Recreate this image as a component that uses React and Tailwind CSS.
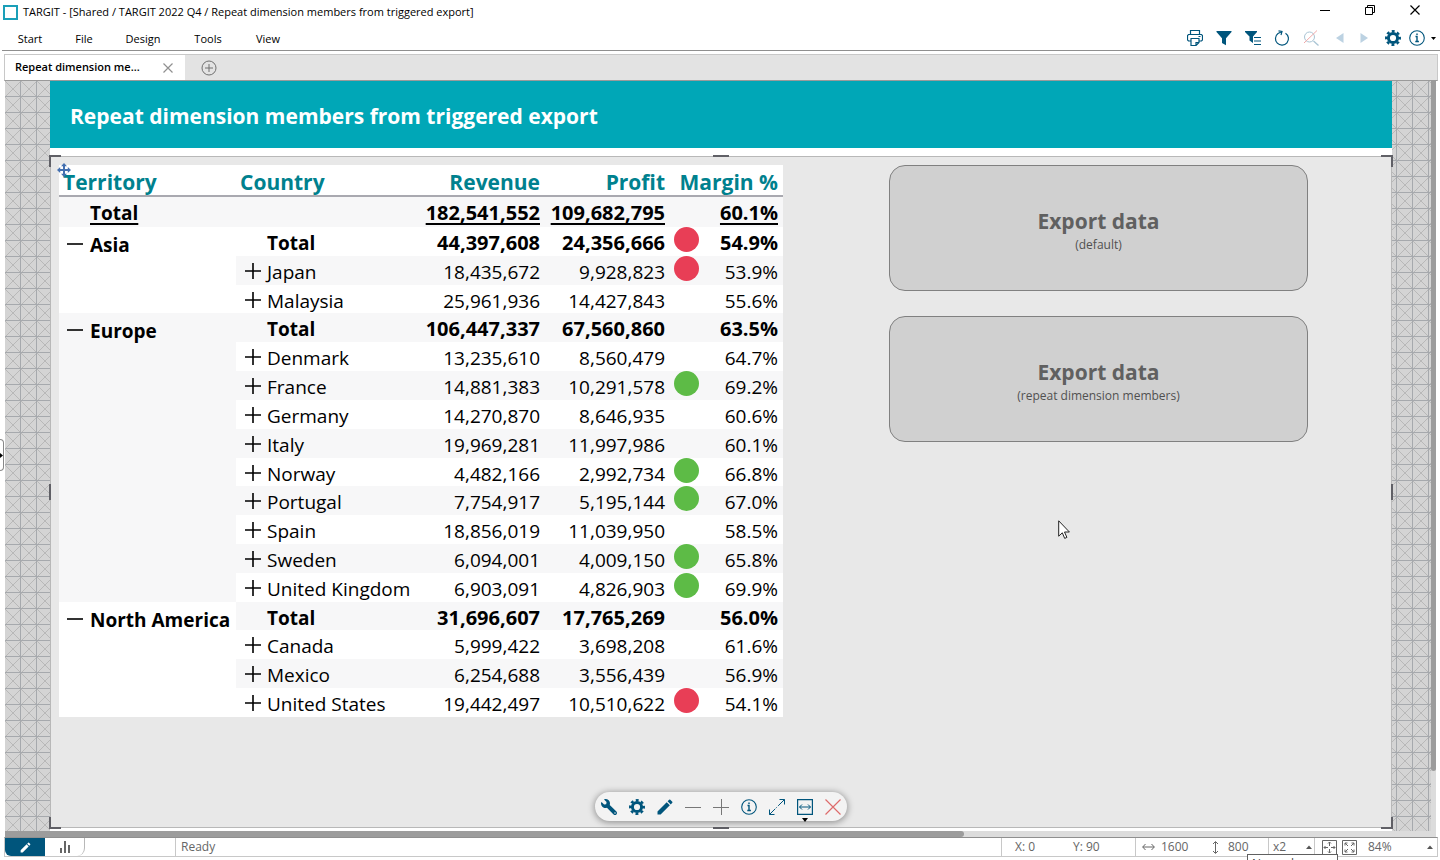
import React from 'react';
import { FaWrench } from 'react-icons/fa';
import { MdEdit } from 'react-icons/md';
import clsx from 'clsx';

const groups = [
  {
    name: 'Asia',
    rows: [
      { country: 'Total', revenue: '44,397,608', profit: '24,356,666', margin: '54.9%', dot: 'red' },
      { country: 'Japan', revenue: '18,435,672', profit: '9,928,823', margin: '53.9%', dot: 'red' },
      { country: 'Malaysia', revenue: '25,961,936', profit: '14,427,843', margin: '55.6%' },
    ],
  },
  {
    name: 'Europe',
    rows: [
      { country: 'Total', revenue: '106,447,337', profit: '67,560,860', margin: '63.5%' },
      { country: 'Denmark', revenue: '13,235,610', profit: '8,560,479', margin: '64.7%' },
      { country: 'France', revenue: '14,881,383', profit: '10,291,578', margin: '69.2%', dot: 'green' },
      { country: 'Germany', revenue: '14,270,870', profit: '8,646,935', margin: '60.6%' },
      { country: 'Italy', revenue: '19,969,281', profit: '11,997,986', margin: '60.1%' },
      { country: 'Norway', revenue: '4,482,166', profit: '2,992,734', margin: '66.8%', dot: 'green' },
      { country: 'Portugal', revenue: '7,754,917', profit: '5,195,144', margin: '67.0%', dot: 'green' },
      { country: 'Spain', revenue: '18,856,019', profit: '11,039,950', margin: '58.5%' },
      { country: 'Sweden', revenue: '6,094,001', profit: '4,009,150', margin: '65.8%', dot: 'green' },
      { country: 'United Kingdom', revenue: '6,903,091', profit: '4,826,903', margin: '69.9%', dot: 'green' },
    ],
  },
  {
    name: 'North America',
    rows: [
      { country: 'Total', revenue: '31,696,607', profit: '17,765,269', margin: '56.0%' },
      { country: 'Canada', revenue: '5,999,422', profit: '3,698,208', margin: '61.6%' },
      { country: 'Mexico', revenue: '6,254,688', profit: '3,556,439', margin: '56.9%' },
      { country: 'United States', revenue: '19,442,497', profit: '10,510,622', margin: '54.1%', dot: 'red' },
    ],
  },
];

const menus = [
  { label: 'Start', width: 'w-[60px]' },
  { label: 'File', width: 'w-12' },
  { label: 'Design', width: 'w-[70px]' },
  { label: 'Tools', width: 'w-[60px]' },
  { label: 'View', width: 'w-[60px]' },
];

const Svg = ({ size = 16, children, className }) => (
  <svg width={size} height={size} viewBox={`0 0 ${size} ${size}`} fill="none" stroke="currentColor" className={className} aria-hidden="true">
    {children}
  </svg>
);

const GearIcon = () => (
  <Svg>
    <circle cx="8" cy="8" r="4.6" strokeWidth="3" />
    <circle cx="8" cy="8" r="6.8" strokeWidth="2.4" strokeDasharray="2.9 2.44" strokeDashoffset="1.45" />
  </Svg>
);

const InfoIcon = () => (
  <Svg>
    <circle cx="8" cy="8" r="7.3" strokeWidth="1.1" />
    <path d="M6.5 6.5H8v5M6.3 11.5h3.6" strokeWidth="1.4" />
    <circle cx="8" cy="4.2" r="0.5" strokeWidth="1" />
  </Svg>
);

const PrintIcon = () => (
  <Svg>
    <path d="M3.5 4.5v-4h9v4M3.500 11h-2l-1-1v-4.500l1-1h13l1 1V10l-1 1h-2M11.500 6.500h2M3.500 8.500h9M4 8.500v7h5l3-3v-4M9 15.500v-3h3" strokeWidth="1.2" />
  </Svg>
);

const FilterIcon = () => (
  <Svg>
    <path d="M.5 1h15v1L10 8.200v7L6 13V8.200L.5 2z" fill="currentColor" stroke="none" />
  </Svg>
);

const FilterListIcon = () => (
  <Svg>
    <path d="M0 1h12v1L8 6.500V13L4.500 10.500V6.500L0 2z" fill="currentColor" stroke="none" />
    <path d="M9 7.500h7M9 11h7M9 14.500h7" strokeWidth="1.2" />
  </Svg>
);

const RefreshIcon = () => (
  <Svg>
    <path d="M11.500 3.200A6.500 6.500 0 1 1 4 3.500L8 1.500M4.500 .800L8 1.500L7 5" strokeWidth="1.2" />
  </Svg>
);

const NoSearchIcon = () => (
  <Svg>
    <circle cx="6.500" cy="7" r="5" stroke="#a9c4d4" />
    <path d="M10.500 11l5 4.500" stroke="#a9c4d4" strokeWidth="1.3" />
    <path d="M1 13L14 .500" stroke="#f0a9a9" />
  </Svg>
);

const PlusIcon = () => (
  <Svg>
    <path d="M0 8h16M8 0v16" strokeWidth="1.6" />
  </Svg>
);

const MinusIcon = () => (
  <Svg>
    <path d="M0 8h16" strokeWidth="1.6" />
  </Svg>
);

const CrossIcon = ({ size = 16 }) => (
  <Svg size={size}>
    <path d={`M.5 .5L${size - 0.5} ${size - 0.5}M${size - 0.5} .5L.5 ${size - 0.5}`} strokeWidth="1.2" />
  </Svg>
);

const ExpandIcon = () => (
  <Svg>
    <path d="M10.500 .500h5v5M5.500 15.500h-5v-5" />
    <path d="M15.500 .500L.500 15.500" strokeDasharray="9 1.500 1 1.500" />
  </Svg>
);

const FitWidthIcon = () => (
  <Svg>
    <path d="M.600.600h14.800v14.800H.600z" strokeWidth="1.2" />
    <path d="M2.500 8h11M5 5.500L2.500 8L5 10.500M11 5.500L13.500 8L11 10.500" strokeWidth="1" />
  </Svg>
);

const MoveIcon = () => (
  <svg width="14" height="14" viewBox="0 0 14 14" aria-hidden="true">
    <path d="M7 0l3 3.200H8v2.800h2.800V4L14 7l-3.200 3V8H8v2.800h2L7 14l-3-3.200h2V8H3.200v2L0 7l3.200-3v2H6V3.200H4z" fill="#4470b0" />
  </svg>
);

const Handle = ({ className }) => <span className={clsx('absolute border-[#606066]', className)} />;

const TableRow = ({ row, shaded, children }) => {
  const isTotal = row.country === 'Total';
  return (
    <tr className={clsx('align-top leading-6', shaded ? 'bg-[#f7f7f8]' : 'bg-white', isTotal ? 'text-[20px] font-bold' : 'text-[19px]')}>
      {children}
      <td className="pt-1 text-[19px]">
        <div className="flex items-center gap-1.5 pl-[9px]">
          {isTotal ? <span className="w-4" /> : (
            <button type="button" aria-label={`Expand ${row.country}`} className="pb-0.5">
              <PlusIcon />
            </button>
          )}
          {row.country}
        </div>
      </td>
      <td className="pt-1 pr-[5px] text-right">{row.revenue}</td>
      <td className="pt-1 pr-[5px] text-right">{row.profit}</td>
      <td className="pr-[5px] pl-1">
        <div className="flex items-start">
          {row.dot && <span className={clsx('size-[25px] rounded-full', row.dot === 'red' ? 'bg-[#e83e56]' : 'bg-[#5dbb46]')} />}
          <span className="ml-auto pt-1">{row.margin}</span>
        </div>
      </td>
    </tr>
  );
};

const SalesTable = () => {
  let index = 0;
  return (
    <table className="h-[552px] w-[724px] table-fixed border-collapse bg-white text-[20px] text-black">
      <colgroup>
        <col className="w-[177px]" />
        <col className="w-[184px]" />
        <col className="w-[125px]" />
        <col className="w-[125px]" />
        <col />
      </colgroup>
      <thead>
        <tr className="h-[31px] border-b-2 border-[#a9a9b0] text-[21px] leading-6 text-[#00818e]">
          <th className="pt-1 pl-1 text-left">Territory</th>
          <th className="pt-1 pl-1 text-left">Country</th>
          <th className="pt-1 pr-[5px] text-right">Revenue</th>
          <th className="pt-1 pr-[5px] text-right">Profit</th>
          <th className="pt-1 pr-[5px] text-right">Margin %</th>
        </tr>
      </thead>
      <tbody>
        <tr className="h-[31px] bg-[#f7f7f8] font-bold leading-6 underline decoration-2 underline-offset-3">
          <td className="pt-0.5 pl-[31px] text-[19px]">Total</td>
          <td />
          <td className="pt-0.5 pr-[5px] text-right">182,541,552</td>
          <td className="pt-0.5 pr-[5px] text-right">109,682,795</td>
          <td className="pt-0.5 pr-[5px] text-right">60.1%</td>
        </tr>
        {groups.map((group, groupIndex) => group.rows.map((row, i) => {
          index += 1;
          return (
            <TableRow key={group.name + row.country} row={row} shaded={index % 2 === 0}>
              {i === 0 && (
                <td rowSpan={group.rows.length} className={clsx('pt-1.5 text-[19px]', groupIndex === 1 ? 'bg-[#f7f7f8]' : 'bg-white')}>
                  <div className="flex items-center gap-[7px] pl-2 whitespace-nowrap">
                    <button type="button" aria-label={`Collapse ${group.name}`} className="pb-0.5">
                      <MinusIcon />
                    </button>
                    {group.name}
                  </div>
                </td>
              )}
            </TableRow>
          );
        }))}
      </tbody>
    </table>
  );
};

const ExportButton = ({ note }) => (
  <button type="button" className="flex h-[126px] w-full flex-col items-center justify-center rounded-2xl border border-[#808080] bg-[#d0d0d0] pt-1.5">
    <span className="text-[21px] leading-7 font-bold text-[#606060]">Export data</span>
    <span className="text-[12px] leading-5 text-[#505050]">{note}</span>
  </button>
);

const TitleBar = () => (
  <header className="flex h-6 items-center pl-[3px]">
    <span className="size-[15px] border-2 border-[#1a9fb8] bg-white" />
    <h1 className="ml-[5px] text-[11px]">TARGIT - [Shared / TARGIT 2022 Q4 / Repeat dimension members from triggered export]</h1>
    <div className="ml-auto flex items-center gap-[35px] pr-5 pb-1">
      <button type="button" aria-label="Minimize">
        <Svg size={10}><path d="M0 5.500h10" /></Svg>
      </button>
      <button type="button" aria-label="Restore">
        <Svg size={10}><path d="M.500 2.500h7v7h-7zM2.500 2.500v-2h7v7h-2" /></Svg>
      </button>
      <button type="button" aria-label="Close"><CrossIcon size={10} /></button>
    </div>
  </header>
);

const MenuBar = () => (
  <div className="ml-0.5 flex h-[27px] items-center border-b border-[#8f8f8f] pt-0.5 text-[11px]">
    <nav className="-ml-0.5 flex pt-0.5">
      {menus.map((menu) => (
        <button type="button" key={menu.label} className={clsx('text-center', menu.width)}>{menu.label}</button>
      ))}
    </nav>
    <div className="ml-auto flex items-center gap-[13px] pr-1 text-[#00557c]">
      <button type="button" aria-label="Print"><PrintIcon /></button>
      <button type="button" aria-label="Filter"><FilterIcon /></button>
      <button type="button" aria-label="Filter list"><FilterListIcon /></button>
      <button type="button" aria-label="Refresh"><RefreshIcon /></button>
      <button type="button" aria-label="Clear search"><NoSearchIcon /></button>
      <div className="flex gap-3.5 px-[3px] text-[#bcd2e2]">
        <button type="button" aria-label="Back">
          <Svg size={10}><path d="M8.500 0v10L1 5z" fill="currentColor" stroke="none" /></Svg>
        </button>
        <button type="button" aria-label="Forward">
          <Svg size={10}><path d="M1.500 0v10L9 5z" fill="currentColor" stroke="none" /></Svg>
        </button>
      </div>
      <button type="button" aria-label="Settings"><GearIcon /></button>
      <button type="button" aria-label="Information" className="-ml-[5px] flex items-center gap-1.5">
        <InfoIcon />
        <Svg size={5}><path d="M0 1h5L2.500 4z" fill="#000" stroke="none" /></Svg>
      </button>
    </div>
  </div>
);

const TabStrip = () => (
  <div className="mt-[3px] mr-0.5 ml-1 flex h-[27px] items-center border border-[#c8c8c8] border-b-[#9a9a9a] bg-[#e3e3e3]">
    <div className="flex h-full w-[180px] items-center justify-between bg-white pr-3 pl-2.5">
      <button type="button" className="text-[11px] font-semibold">Repeat dimension me...</button>
      <button type="button" aria-label="Close tab" className="text-[#909090]"><CrossIcon size={10} /></button>
    </div>
    <button type="button" aria-label="New tab" className="ml-4 text-[#707070]">
      <Svg><circle cx="8" cy="8" r="7" /><path d="M4 8h8M8 4v8" /></Svg>
    </button>
  </div>
);

const FloatingToolbar = () => (
  <div className="absolute bottom-1.5 left-1/2 flex h-[29px] -translate-x-1/2 items-center gap-3 rounded-full bg-[#f3f3f3] px-1.5 text-[#00557c] shadow-[0_1px_6px_1px_rgba(0,0,0,0.35)]">
    <button type="button" aria-label="Properties" className="-scale-x-100"><FaWrench size={16} /></button>
    <button type="button" aria-label="Settings"><GearIcon /></button>
    <button type="button" aria-label="Edit"><MdEdit size={20} className="-mx-0.5" /></button>
    <button type="button" aria-label="Less" className="text-[#777]">
      <Svg><path d="M0 8.500h16" /></Svg>
    </button>
    <button type="button" aria-label="More" className="text-[#777]">
      <Svg><path d="M0 8.500h16M8.500 0v16" /></Svg>
    </button>
    <button type="button" aria-label="Information"><InfoIcon /></button>
    <button type="button" aria-label="Expand"><ExpandIcon /></button>
    <button type="button" aria-label="Fit width" className="relative">
      <FitWidthIcon />
      <svg width="6" height="4" viewBox="0 0 6 4" className="absolute top-[19px] left-[5px]" aria-hidden="true"><path d="M0 0h6L3 4z" /></svg>
    </button>
    <button type="button" aria-label="Remove" className="text-[#dd6b6b]"><CrossIcon /></button>
  </div>
);

const Report = () => (
  <main className="flex flex-1 flex-col bg-white pb-[3px]">
    <div className="flex h-[67px] items-center bg-[#00a7b7] pt-1 pl-5">
      <h2 className="text-[21px] font-bold text-white">Repeat dimension members from triggered export</h2>
    </div>
    <div className="h-2" />
    <section className="relative flex flex-1 items-start border border-[#b8b8b8] bg-[#e8e8e8] pt-2 pr-[83px] pb-8 pl-2">
      <SalesTable />
      <div className="ml-[106px] flex flex-1 flex-col gap-[25px]">
        <ExportButton note="(default)" />
        <ExportButton note="(repeat dimension members)" />
      </div>
      <span className="absolute top-1.5 left-1.5"><MoveIcon /></span>
      <Handle className="-top-0.5 -left-0.5 size-3 border-t-2 border-l-2" />
      <Handle className="-top-0.5 -right-0.5 size-3 border-t-2 border-r-2" />
      <Handle className="-bottom-0.5 -left-0.5 size-3 border-b-2 border-l-2" />
      <Handle className="-right-0.5 -bottom-0.5 size-3 border-r-2 border-b-2" />
      <Handle className="-top-0.5 left-1/2 w-4 -translate-x-1/2 border-t-2" />
      <Handle className="-bottom-0.5 left-1/2 w-4 -translate-x-1/2 border-t-2" />
      <Handle className="top-1/2 -left-0.5 h-4 -translate-y-1/2 border-l-2" />
      <Handle className="top-1/2 -right-0.5 h-4 -translate-y-1/2 border-l-2" />
      <FloatingToolbar />
      <svg width="12" height="19" viewBox="0 0 12 19" className="absolute top-[363px] right-[321px]" aria-hidden="true">
        <path d="M.700 .800v15.400l3.600-3.400 2.400 5.600 2.200-1-2.400-5.400h4.900z" fill="#fff" stroke="#222" />
      </svg>
    </section>
  </main>
);

const UpArrow = () => <Svg size={6}><path d="M0 5h6L3 1.500z" fill="#555" stroke="none" /></Svg>;

const StatusBar = () => (
  <footer className="relative mr-0.5 mb-[3px] ml-1 flex h-5 items-stretch border border-[#c8c8c8] border-t-[#8f8f8f] text-[12px] text-[#666]">
    <button type="button" aria-label="Design mode" className="flex w-10 items-center justify-center rounded-bl-md bg-[#00557c] text-white"><MdEdit size={13} /></button>
    <button type="button" aria-label="Analysis mode" className="flex w-10 items-center justify-center rounded-br-lg border-r border-[#b8b8b8]">
      <Svg size={12} className="text-[#666]"><path d="M2 7v5M6 0v12M10 4v8" strokeWidth="2" /></Svg>
    </button>
    <span className="ml-[90px] flex items-center border-l border-[#c8c8c8] pl-[5px]">Ready</span>
    <div className="ml-auto flex items-stretch">
      <span className="flex w-[70px] items-center border-l border-[#c8c8c8] pl-[13px]">X: 0</span>
      <span className="flex w-16 items-center pl-0.5">Y: 90</span>
      <span className="flex w-[70px] items-center gap-1.5 border-l border-[#c8c8c8] pl-1.5">
        <svg width="13" height="8" viewBox="0 0 13 8" fill="none" stroke="currentColor" aria-hidden="true"><path d="M.700 4h11.600M3.500 1L.700 4l2.800 3M9.500 1l2.800 3-2.800 3" /></svg>
        1600
      </span>
      <span className="flex w-[63px] items-center gap-[9px] pl-[7px]">
        <svg width="7" height="13" viewBox="0 0 7 13" fill="none" stroke="currentColor" aria-hidden="true"><path d="M3.500 1v11M1 3l2.500-2.500L6 3M1 10l2.500 2.500L6 10" /></svg>
        800
      </span>
      <button type="button" className="flex w-[46px] items-center justify-between border-l border-[#c8c8c8] pr-0.5 pl-1">x2 <UpArrow /></button>
      <span className="flex items-center gap-[5px] border-l border-[#c8c8c8] pl-[7px]">
        <button type="button" aria-label="Fit to center">
          <Svg size={15}><path d="M.500.500h14v14h-14z" /><path d="M7.500 2v4M7.500 9v4M2 7.500h4M9 7.500h4M6 3.500l1.500-1.500L9 3.500M6 11.500L7.500 13 9 11.500M3.500 6L2 7.500 3.500 9M11.500 6L13 7.500 11.500 9" /></Svg>
        </button>
        <button type="button" aria-label="Fit to window">
          <Svg size={15}><path d="M.500.500h14v14h-14zM3 5.500V3h2.500M3 3l3 3M9.500 3H12v2.500M12 3L9 6M3 9.500V12h2.500M3 12l3-3M9.500 12H12V9.500M12 12L9 9" /></Svg>
        </button>
      </span>
      <button type="button" className="flex w-20 items-center justify-between pr-1 pl-[11px]">84% <UpArrow /></button>
    </div>
    <div className="absolute top-4 right-[99px] h-[7px] w-[91px] overflow-hidden border border-b-0 border-[#606060] bg-white pl-1 leading-[18px] text-[#444]">Normal zoom</div>
  </footer>
);

export default function App() {
  return (
    <div className="relative flex min-h-screen flex-col bg-white font-['Open_Sans','Noto_Sans',sans-serif] text-black">
      <TitleBar />
      <MenuBar />
      <TabStrip />
      <div className="mr-1 ml-[5px] flex flex-1 flex-col">
        <div className="flex flex-1">
          <div className="flex flex-1 bg-[#d4d4d4] bg-[linear-gradient(to_right,transparent_15px,#a6a9ad_15px),linear-gradient(to_bottom,transparent_15px,#a6a9ad_15px),linear-gradient(45deg,transparent_47%,#b8b8b8_50%,transparent_53%),linear-gradient(-45deg,transparent_47%,#b8b8b8_50%,transparent_53%)] bg-size-[16px_16px] pr-[39px] pl-[45px]">
            <Report />
          </div>
          <div className="w-[5px] bg-[#dcdcdc]">
            <div className="h-[92%] rounded-b-full bg-[#9c9c9c]" />
          </div>
        </div>
        <div className="h-1.5 bg-[#dcdcdc]">
          <div className="h-full w-[67%] rounded-r-full bg-[#9c9c9c]" />
        </div>
      </div>
      <StatusBar />
      <button type="button" aria-label="Show side panel" className="absolute top-[439px] left-0 flex h-8 w-1 items-center rounded-r-sm border-y border-r border-[#888] bg-white">
        <svg width="3" height="5" viewBox="0 0 3 5" aria-hidden="true"><path d="M0 0v5l3-2.500z" /></svg>
      </button>
    </div>
  );
}
